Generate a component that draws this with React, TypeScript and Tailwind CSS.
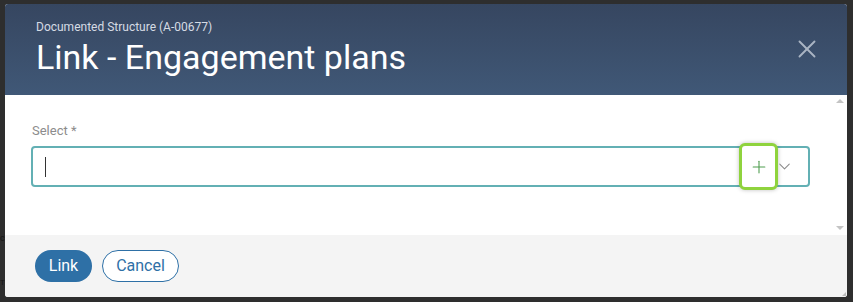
import { X, Plus, ChevronDown } from "lucide-react";

export default function App() {
  return (
    <div
      className="relative w-[853px] h-[302px] bg-[#2e2e2e] pt-[4px] pl-[5px] overflow-hidden"
      style={{ fontFamily: "Roboto, 'Liberation Sans', sans-serif" }}
    >
      {/* bits of the page behind the overlay */}
      <span className="absolute left-0 top-[232px] text-[9px] leading-[12px] text-[#161616]">c</span>
      <span className="absolute left-0 top-[278px] text-[8px] leading-[10px] text-[#161616]">T</span>

      <div className="w-[842px] h-[293px] rounded-[3px] overflow-hidden flex flex-col bg-white">
        {/* Header */}
        <div className="h-[91px] shrink-0 bg-gradient-to-b from-[#364660] to-[#405877] px-[31px] pt-[15px] flex justify-between">
          <div>
            <div className="text-[12px] leading-[16px] text-[#d5dbe4]">
              Documented Structure (A-00677)
            </div>
            <h1 className="text-[34px] leading-[40px] mt-[2px] text-white">
              Link - Engagement plans
            </h1>
          </div>
          <button className="mt-[15px] mr-[-6px] h-[30px] w-[30px] flex items-center justify-center text-[#a9b4c3]" aria-label="Close">
            <X size={34} strokeWidth={1.5} />
          </button>
        </div>

        {/* Body */}
        <div className="relative h-[140px] shrink-0 bg-white pl-[26px] pr-[32px] pt-[28px]">
          <div className="absolute right-[3px] top-[4px] w-0 h-0 border-l-[4px] border-r-[4px] border-b-[4px] border-l-transparent border-r-transparent border-b-[#c4c4c4]" />
          <div className="absolute right-[3px] bottom-[5px] w-0 h-0 border-l-[4px] border-r-[4px] border-t-[4px] border-l-transparent border-r-transparent border-t-[#c4c4c4]" />

          <label className="block text-[13px] leading-[16px] text-[#8c8c8c] pl-[1px]">Select *</label>
          <div className="relative mt-[7px] h-[41px] w-[779px] rounded-[4px] border-2 border-[#63b0b4] flex items-center pl-[12px]">
            <div className="w-[1px] h-[20px] bg-[#333]" />
            <div className="absolute right-[30px] top-[-5px] w-[39px] h-[47px] rounded-[6px] border-[3px] border-[#8fd33d] bg-white shadow-[0_0_4px_rgba(0,0,0,0.25)] flex items-center justify-center text-[#4f9d4f]">
              <Plus size={20} strokeWidth={1.3} />
            </div>
            <div className="absolute right-[14px] top-[9px] text-[#8a8a8a]">
              <ChevronDown size={19} strokeWidth={1.3} />
            </div>
          </div>
        </div>

        {/* Footer */}
        <div className="relative flex-1 bg-[#f4f4f4] px-[30px] flex items-center gap-[10px]">
          <button className="h-[32px] w-[57px] rounded-full bg-[#2e70a6] text-white text-[16px]">
            Link
          </button>
          <button className="h-[32px] w-[77px] rounded-full bg-white border border-[#2e70a6] text-[#2e70a6] text-[16px]">
            Cancel
          </button>
          <div className="absolute right-[1px] bottom-[1px] w-0 h-0 border-l-[4px] border-b-[4px] border-l-transparent border-b-[#bdbdbd]" />
        </div>
      </div>
    </div>
  );
}
